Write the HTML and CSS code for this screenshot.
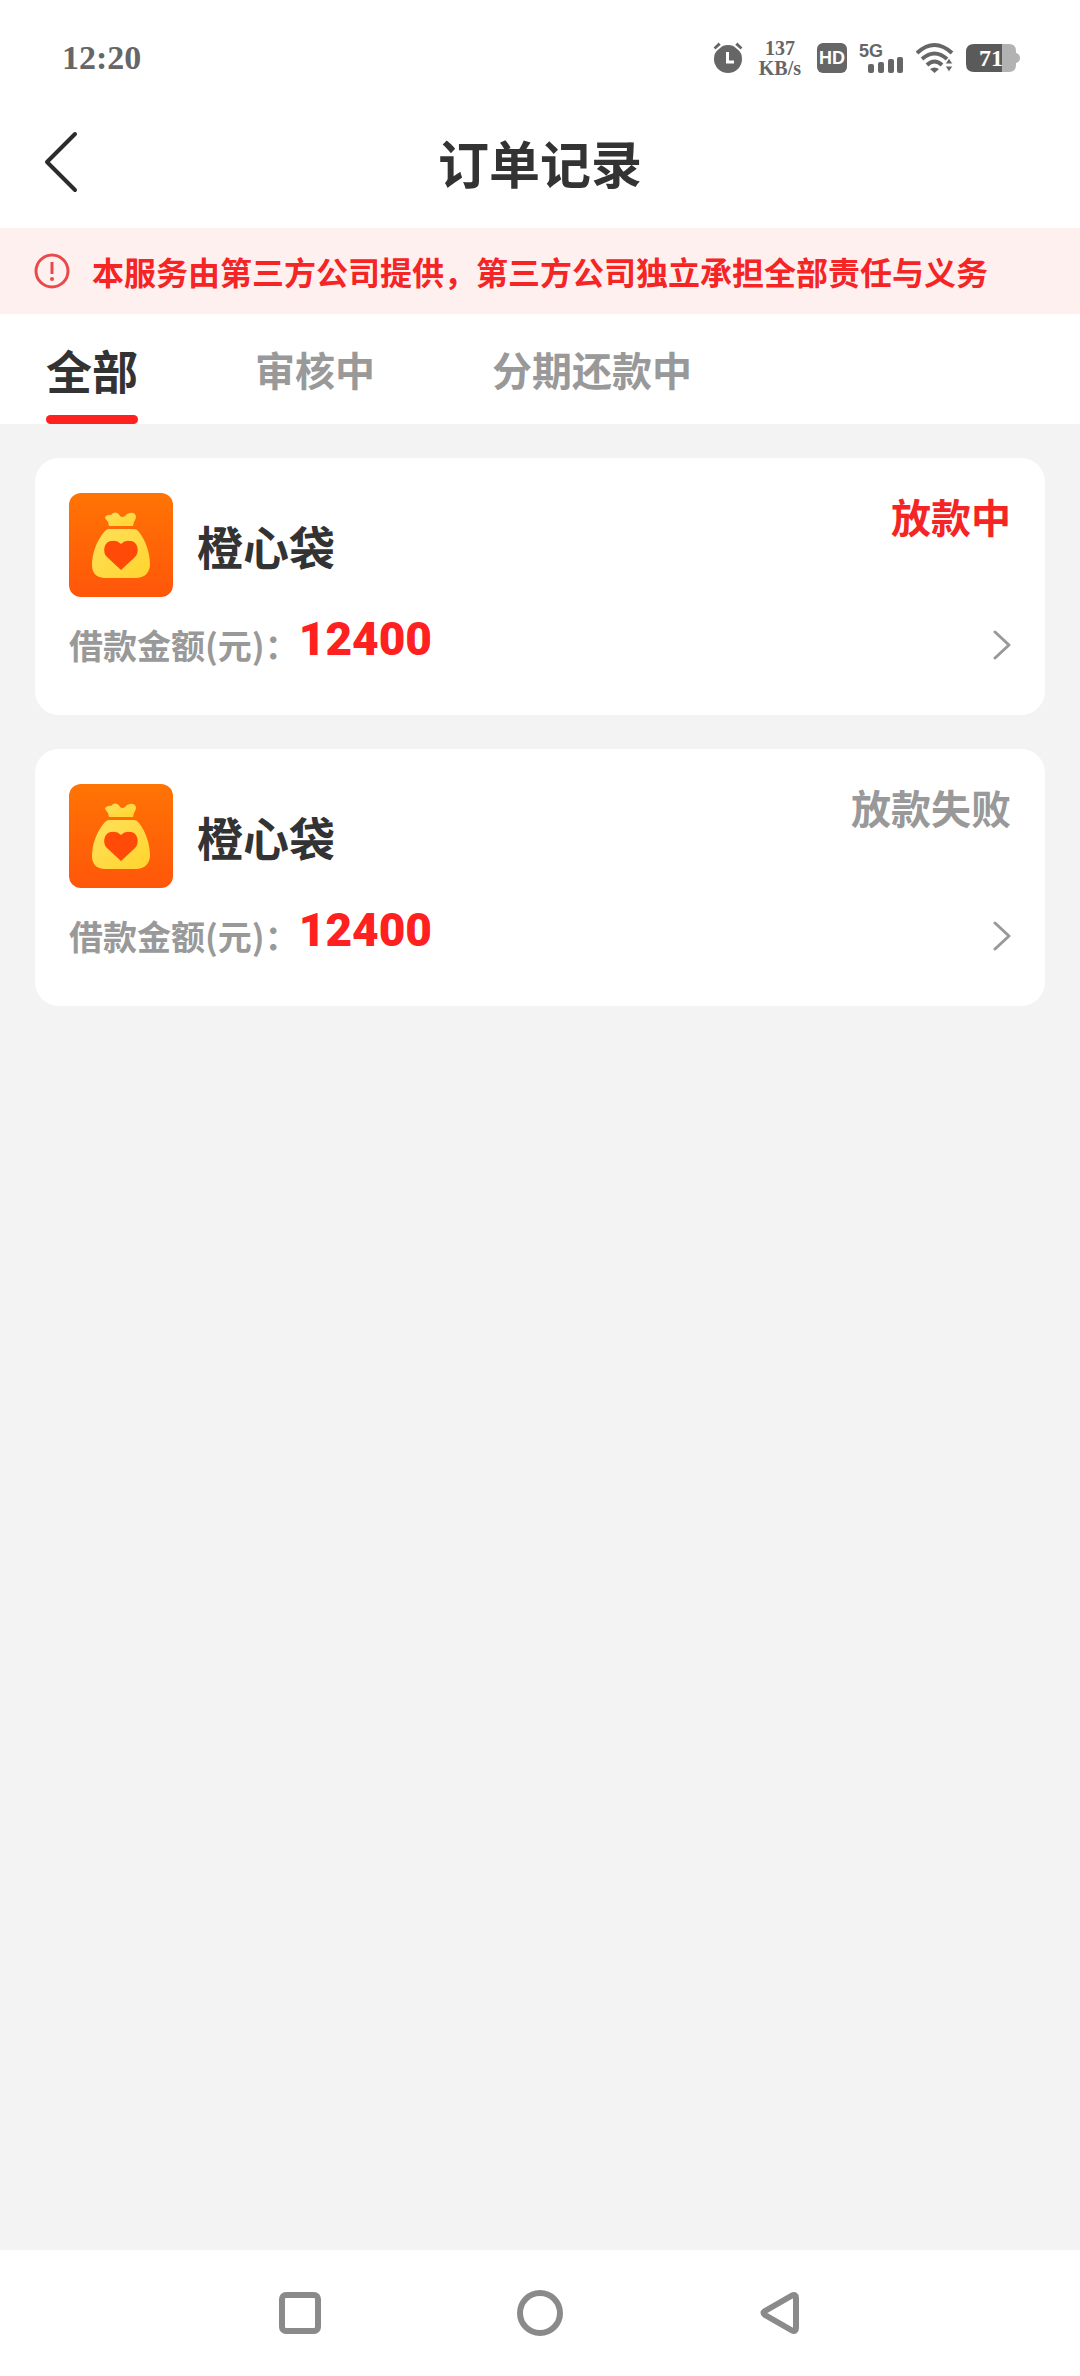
FILE: index.html
```html
<!DOCTYPE html>
<html lang="zh-CN">
<head>
    <meta charset="UTF-8">
    <meta name="viewport" content="width=device-width, initial-scale=1.0">
    <title>订单记录</title>
    <link rel="stylesheet" href="styles.css">
</head>
<body>

    <!-- shared shapes -->
    <svg class="defs" aria-hidden="true">
        <defs>
            <linearGradient id="bagBg" x1="0" y1="0" x2="0" y2="1">
                <stop offset="0" stop-color="#ff7404"/>
                <stop offset="1" stop-color="#ff560a"/>
            </linearGradient>
            <linearGradient id="bagFill" x1="0" y1="0" x2="1" y2="1">
                <stop offset="0" stop-color="#ffe05c"/>
                <stop offset="1" stop-color="#ffd42c"/>
            </linearGradient>
            <symbol id="bag" viewBox="0 0 104 104">
                <rect width="104" height="104" rx="12" fill="url(#bagBg)"/>
                <path d="M36 24Q39 21 42 22C45 18 49 19 51 23Q53 25 56 23C60 18 67 19 67 24Q67 26 65 29L64 33H40L39 29Q36 26 36 24Z" fill="url(#bagFill)"/>
                <path d="M40 36H65Q68 36 70 39C77 48 81 60 81 72Q80 84 68 85H35Q23 84 23 72C23 60 28 47 36 38Q38 36 40 36Z" fill="url(#bagFill)"/>
                <path d="M52 77L38 64C33 59 35 48 43 48Q48 47 52 51Q56 47 61 48C69 48 71 59 66 64Z" fill="#ff4a08"/>
            </symbol>
            <symbol id="arrow" viewBox="0 0 18 30">
                <path d="M2 2L16 15L2 28" fill="none" stroke="#999" stroke-width="3" stroke-linecap="round" stroke-linejoin="round"/>
            </symbol>
        </defs>
    </svg>

    <div class="status-bar">
        <span class="time">12:20</span>
        <div class="status-icons">
            <svg width="30" height="32" viewBox="0 0 30 32">
                <circle cx="15" cy="17" r="14" fill="#666"/>
                <path d="M2 7L7 2M28 7L23 2" stroke="#666" stroke-width="4"/>
                <path d="M1 10L9 3M29 10L21 3" stroke="#fff" stroke-width="2"/>
                <path d="M14.5 10V20H21" fill="none" stroke="#fff" stroke-width="3"/>
            </svg>
            <span class="speed">137<br>KB/s</span>
            <svg width="30" height="30" viewBox="0 0 30 30">
                <rect width="30" height="30" rx="6" fill="#666"/>
                <text x="15" y="21" class="hd">HD</text>
            </svg>
            <svg width="45" height="32" viewBox="0 0 45 32">
                <text x="0" y="15" class="net">5G</text>
                <rect x="9" y="22" width="6" height="9" rx="2" fill="#666"/>
                <rect x="19" y="20" width="6" height="11" rx="2" fill="#666"/>
                <rect x="29" y="17" width="6" height="14" rx="2" fill="#666"/>
                <rect x="38" y="15" width="6" height="16" rx="2" fill="#666"/>
            </svg>
            <svg width="38" height="32" viewBox="0 0 38 32">
                <g fill="none" stroke="#666" stroke-width="4">
                    <path d="M1 11Q18.5 -5 36 11"/>
                    <path d="M6 17Q18.5 6 31 17"/>
                    <path d="M11 23Q18.5 16 26 23"/>
                </g>
                <path d="M14 27Q18.5 24 23 27L18.5 31Z" fill="#666"/>
                <path d="M29 22L33 16L37 22ZM29 24L33 30L37 24Z" fill="#666" stroke="#fff" stroke-width="1"/>
            </svg>
            <svg width="54" height="28" viewBox="0 0 54 28">
                <path d="M36 0H43Q50 0 50 7V9Q54 10 54 14Q54 18 50 19V21Q50 28 43 28H36Z" fill="#b2b2b2"/>
                <path d="M8 0H36V28H8Q0 28 0 20V8Q0 0 8 0Z" fill="#5a5a5a"/>
                <text x="25" y="22" class="level">71</text>
            </svg>
        </div>
    </div>

    <header class="header">
        <button class="back" type="button" aria-label="返回">
            <svg width="34" height="62" viewBox="0 0 34 62">
                <path d="M31 3L3 31L31 59" fill="none" stroke="#2c2c2c" stroke-width="4" stroke-linecap="round" stroke-linejoin="round"/>
            </svg>
        </button>
        <h1 class="title">订单记录</h1>
    </header>

    <div class="notice">
        <svg width="36" height="36" viewBox="0 0 36 36">
            <circle cx="18" cy="18" r="16" fill="none" stroke="#e84a4a" stroke-width="3"/>
            <path d="M18 9V21" stroke="#e84a4a" stroke-width="3"/>
            <circle cx="18" cy="26" r="2" fill="#e84a4a"/>
        </svg>
        <p class="notice-text">本服务由第三方公司提供，第三方公司独立承担全部责任与义务</p>
    </div>

    <nav class="tabs">
        <button class="tab active" type="button">全部</button>
        <button class="tab" type="button">审核中</button>
        <button class="tab" type="button">分期还款中</button>
    </nav>

    <main class="orders">
        <a class="card" href="#">
            <div class="card-top">
                <svg class="logo" viewBox="0 0 104 104"><use href="#bag"/></svg>
                <h2 class="name">橙心袋</h2>
                <span class="state pending">放款中</span>
            </div>
            <div class="card-bottom">
                <span class="label">借款金额(元)：</span>
                <span class="amount">12400</span>
                <svg class="arrow" viewBox="0 0 18 30"><use href="#arrow"/></svg>
            </div>
        </a>
        <a class="card" href="#">
            <div class="card-top">
                <svg class="logo" viewBox="0 0 104 104"><use href="#bag"/></svg>
                <h2 class="name">橙心袋</h2>
                <span class="state">放款失败</span>
            </div>
            <div class="card-bottom">
                <span class="label">借款金额(元)：</span>
                <span class="amount">12400</span>
                <svg class="arrow" viewBox="0 0 18 30"><use href="#arrow"/></svg>
            </div>
        </a>
    </main>

    <div class="system-nav">
        <button type="button" aria-label="最近任务">
            <svg width="46" height="46" viewBox="0 0 46 46"><rect x="5" y="5" width="36" height="36" rx="4" fill="none" stroke="#8a8a8a" stroke-width="6"/></svg>
        </button>
        <button type="button" aria-label="主页">
            <svg width="46" height="46" viewBox="0 0 46 46"><circle cx="23" cy="23" r="20" fill="none" stroke="#8a8a8a" stroke-width="6"/></svg>
        </button>
        <button type="button" aria-label="返回上一页">
            <svg width="46" height="46" viewBox="0 0 46 46"><path d="M8 21L35 5.500Q39 4 39 8V38Q39 42 35 40.500L8 25Q5 23 8 21Z" fill="none" stroke="#8a8a8a" stroke-width="6" stroke-linejoin="round"/></svg>
        </button>
    </div>

</body>
</html>
```
FILE: styles.css
```css
* {
    box-sizing: border-box;
}

body {
    display: flex;
    flex-direction: column;
    min-height: 100vh;
    margin: 0;
    background-color: #f3f3f3;
    color: #333;
    font-family: "Noto Sans CJK SC", sans-serif;
    font-weight: bold;
}

h1, h2, p {
    margin: 0;
}

button {
    padding: 0;
    border: none;
    background: none;
    color: inherit;
    font: inherit;
    cursor: pointer;
}

svg {
    display: block;
    flex: none;
}

.defs {
    position: absolute;
    width: 0;
    height: 0;
}

/* status bar */
.status-bar {
    display: flex;
    align-items: center;
    justify-content: space-between;
    height: 116px;
    padding: 0 60px 0 62px;
    background-color: #fff;
    color: #666;
    font-family: "Liberation Serif", serif;
}

.time {
    font-size: 34px;
    line-height: 40px;
}

.status-icons {
    display: flex;
    align-items: center;
    gap: 12px;
}

.speed {
    margin: 0 4px;
    font-size: 20px;
    line-height: 20px;
    text-align: center;
}

.hd, .net {
    font-family: "Liberation Sans", sans-serif;
    font-size: 18px;
    fill: #fff;
    text-anchor: middle;
}

.net {
    fill: #666;
    text-anchor: start;
}

.level {
    font-size: 24px;
    fill: #fff;
    text-anchor: middle;
}

/* header */
.header {
    display: grid;
    grid-template-columns: 1fr auto 1fr;
    align-items: center;
    height: 112px;
    padding: 0 44px 20px;
    background-color: #fff;
}

.back {
    justify-self: start;
}

.title {
    font-size: 51px;
    line-height: 64px;
}

.notice {
    display: flex;
    align-items: center;
    gap: 22px;
    height: 86px;
    padding: 0 34px;
    background-color: #fff0f0;
    color: #f52525;
}

.notice-text {
    font-size: 32px;
    line-height: 40px;
    white-space: nowrap;
}

/* tabs */
.tabs {
    display: flex;
    gap: 117px;
    height: 110px;
    padding: 0 46px;
    background-color: #fff;
}

.tab {
    padding-top: 8px;
    border-bottom: 9px solid transparent;
    color: #999;
    font-size: 40px;
    line-height: 64px;
}

.tab.active {
    position: relative;
    color: #333;
    font-size: 46px;
}

.tab.active::after {
    content: "";
    position: absolute;
    right: 0;
    bottom: -9px;
    left: 0;
    height: 9px;
    border-radius: 5px;
    background-color: #ff2020;
}

/* order list */
.orders {
    display: flex;
    flex: 1;
    flex-direction: column;
    gap: 34px;
    padding: 34px 35px;
}

.card {
    padding: 35px 34px;
    border-radius: 24px;
    background-color: #fff;
    color: inherit;
    text-decoration: none;
}

.card-top {
    display: flex;
    align-items: center;
    gap: 24px;
}

.logo {
    width: 104px;
    height: 104px;
}

.name {
    flex: 1;
    font-size: 46px;
    line-height: 64px;
}

.state {
    align-self: flex-start;
    color: #999;
    font-size: 40px;
    line-height: 46px;
}

.state.pending {
    color: #f52525;
}

.card-bottom {
    display: flex;
    align-items: center;
    height: 83px;
    padding-top: 12px;
}

.label {
    color: #999;
    font-size: 34px;
    line-height: 48px;
}

.amount {
    flex: 1;
    align-self: flex-start;
    color: #ff2020;
    font-family: Roboto, sans-serif;
    font-size: 46px;
    font-weight: 900;
    line-height: 60px;
}

.arrow {
    width: 18px;
    height: 30px;
}

/* system navigation */
.system-nav {
    display: flex;
    align-items: center;
    justify-content: center;
    gap: 194px;
    height: 126px;
    background-color: #fff;
}
```
